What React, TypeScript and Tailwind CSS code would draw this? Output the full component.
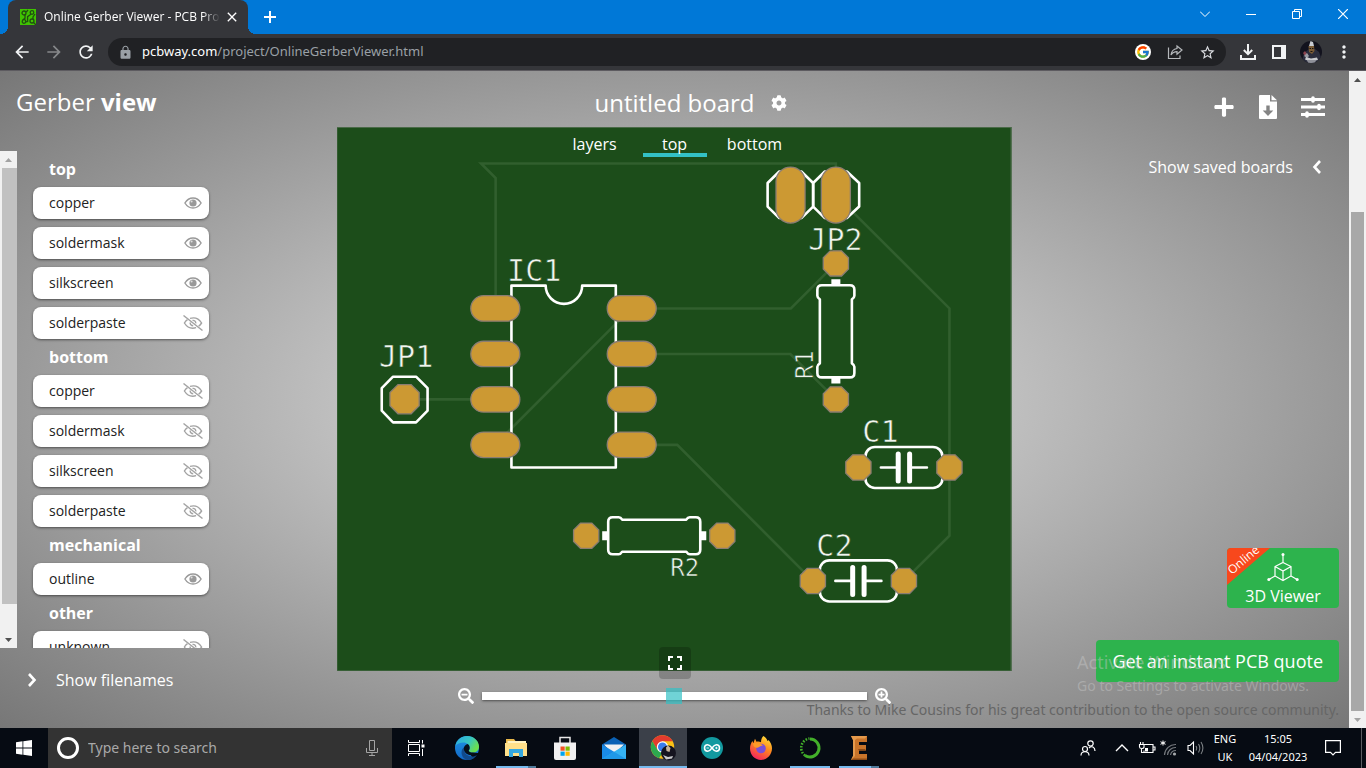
import React, { useState } from "react";
import { FcGoogle } from "react-icons/fc";
import {
  MdArrowBack,
  MdArrowForward,
  MdClose,
  MdFullscreen,
  MdLock,
  MdMoreVert,
  MdRefresh,
  MdStarBorder,
} from "react-icons/md";
import { FaCog, FaPlus, FaSearchMinus, FaSearchPlus } from "react-icons/fa";

/* ---------- Browser chrome ---------- */

function Favicon() {
  return (
    <svg viewBox="0 0 16 16" className="size-4 shrink-0" aria-hidden="true">
      <rect width="16" height="16" fill="#3fc400" />
      <g fill="none" stroke="#214d12" strokeWidth="1.3">
        <circle cx="4" cy="4" r="2" />
        <circle cx="12" cy="3.5" r="1.8" />
        <circle cx="4" cy="12.5" r="1.8" />
        <circle cx="12" cy="12" r="2" />
        <path d="M5 5.8v3.4L3 10.8M6.2 3.2 8 1M11 5.2 7.6 7.6v4.8l-2 .6M13.5 13.5 16 16M13 10V8l2-3" />
      </g>
    </svg>
  );
}

function Avatar() {
  return (
    <svg viewBox="0 0 22 22" className="size-[22px]" aria-hidden="true">
      <clipPath id="avatar-clip">
        <circle cx="11" cy="11" r="11" />
      </clipPath>
      <g clipPath="url(#avatar-clip)">
        <rect width="22" height="22" fill="#12121d" />
        <path d="M2 20 4 12l5-4h6l4 3 3 8v4H2z" fill="#2b2d3d" />
        <path d="M9 5 10.500 0l2.500 1 1 4z" fill="#c9ccd2" />
        <path d="M8.500 5h5.500l.5 5-2.500 3-3-2z" fill="#7a5c38" />
        <path d="M9.500 7h1.500v1H9.500zM12 7h1.500v1H12zM10.500 10h2v1h-2z" fill="#1a1410" />
        <path d="M3 12l2-2 2 3-2 2z" fill="#8c4550" />
        <path d="M4 15l3-3 2 3-2 2z" fill="#9a9ca4" />
        <path d="M6 16l5 1.500 6-1 1 2.500-8 1.500-5-2z" fill="#c9cbcf" />
        <path d="M7 19h9l-1 3H8z" fill="#8f9199" />
      </g>
    </svg>
  );
}

function TabStrip() {
  return (
    <div className="flex h-[34px] items-stretch bg-[#0078d7] pl-2 text-white">
      <div className="relative flex w-60 items-center rounded-t-lg bg-[#35363a] pr-2 pl-3">
        <span className="absolute bottom-0 -left-2 size-2 bg-[radial-gradient(circle_at_0_0,transparent_8px,#35363a_8px)]" />
        <span className="absolute -right-2 bottom-0 size-2 bg-[radial-gradient(circle_at_100%_0,transparent_8px,#35363a_8px)]" />
        <Favicon />
        <span className="ml-2 flex-1 overflow-hidden text-xs whitespace-nowrap [mask-image:linear-gradient(to_right,black_90%,transparent)]">
          Online Gerber Viewer - PCB Prototype
        </span>
        <button aria-label="Close tab" className="ml-1">
          <MdClose className="size-4" />
        </button>
      </div>
      <button aria-label="New tab" className="ml-3 w-5">
        <svg viewBox="0 0 12 12" className="mx-auto size-3" stroke="#fff" strokeWidth="2" aria-hidden="true">
          <path d="M6 0v12M0 6h12" />
        </svg>
      </button>
      <div className="mb-1.5 ml-auto flex">
        <button aria-label="Search tabs" className="w-[46px]">
          <svg viewBox="0 0 10 10" className="mx-auto size-2.5" fill="none" stroke="#fff" aria-hidden="true">
            <path d="M0 2.500l5 5 5-5" />
          </svg>
        </button>
        <button aria-label="Minimize" className="w-[46px]">
          <svg viewBox="0 0 10 10" className="mx-auto size-2.5" stroke="#fff" aria-hidden="true">
            <path d="M0 5.500h10" />
          </svg>
        </button>
        <button aria-label="Restore" className="w-[46px]">
          <svg viewBox="0 0 10 10" className="mx-auto size-2.5" fill="none" stroke="#fff" aria-hidden="true">
            <path d="M.5 2.500h7v7h-7zM2.500 2.500v-2h7v7h-2" />
          </svg>
        </button>
        <button aria-label="Close window" className="w-[46px]">
          <svg viewBox="0 0 10 10" className="mx-auto size-2.5" fill="none" stroke="#fff" strokeWidth="1.2" aria-hidden="true">
            <path d="M0 0l10 10M10 0 0 10" />
          </svg>
        </button>
      </div>
    </div>
  );
}

function Toolbar() {
  return (
    <div className="flex h-[37px] items-center border-b border-[#5d5b60] bg-[#35363a] pr-3 pl-3 text-[#f1f3f4]">
      <button aria-label="Back">
        <MdArrowBack className="size-5" />
      </button>
      <button aria-label="Forward" className="ml-3 text-[#86888a]">
        <MdArrowForward className="size-5" />
      </button>
      <button aria-label="Reload" className="ml-3">
        <MdRefresh className="size-5" />
      </button>
      <div className="ml-3 flex h-7 flex-1 items-center rounded-full bg-[#202124] pr-2.5 pl-2.5">
        <MdLock className="size-[15px] shrink-0 text-[#9aa0a6]" />
        <p className="ml-[9px] flex-1 font-['Noto_Sans','Open_Sans',sans-serif] text-[13px] text-[#9aa0a6]">
          <span className="text-white">pcbway.com</span>/project/OnlineGerberViewer.html
        </p>
        <button aria-label="Google" className="rounded-full bg-white p-px">
          <FcGoogle className="size-3.5" />
        </button>
        <button aria-label="Share" className="ml-4">
          <svg viewBox="0 0 16 16" className="size-4" fill="none" stroke="#b5b8bb" strokeWidth="1.2" aria-hidden="true">
            <path d="M1.500 3.500v11h11.500v-3M10 2l5 4-5 4.200V7.600C7.500 7.600 5.500 8.500 4 11c.4-3.500 2.500-6 6-6.500z" />
          </svg>
        </button>
        <button aria-label="Bookmark" className="ml-4 text-[#dadce0]">
          <MdStarBorder className="size-[17px]" />
        </button>
      </div>
      <button aria-label="Downloads" className="ml-3.5">
        <svg viewBox="0 0 16 16" className="size-4" fill="none" stroke="#f1f3f4" strokeWidth="2" aria-hidden="true">
          <path d="M8 0v10M3.800 6 8 10.200 12.200 6M1 11v4h14v-4" />
        </svg>
      </button>
      <button aria-label="Side panel" className="ml-4">
        <svg viewBox="0 0 14 14" className="size-3.5" aria-hidden="true">
          <path fill="#f1f3f4" fillRule="evenodd" d="M0 0h14v14H0zM2 2v10h7V2z" />
        </svg>
      </button>
      <button aria-label="Profile" className="ml-3.5">
        <Avatar />
      </button>
      <button aria-label="Menu" className="ml-3">
        <MdMoreVert className="size-5" />
      </button>
    </div>
  );
}

/* ---------- Scrollbars ---------- */

function Arrow({ up = false, tone }: { up?: boolean; tone: string }) {
  return (
    <svg viewBox="0 0 17 17" className="size-[17px] shrink-0" aria-hidden="true">
      <path d={up ? "M5 11h7L8.500 7z" : "M5 7h7l-3.500 4z"} fill={tone} />
    </svg>
  );
}

/* ---------- Layer list ---------- */

function EyeOpen() {
  return (
    <svg viewBox="0 0 18 12" className="h-3 w-[18px]" aria-hidden="true">
      <path d="M.9 6C3 2.600 5.800 1 9 1s6 1.600 8.100 5C15 9.400 12.200 11 9 11S3 9.400.9 6z" fill="none" stroke="#999" strokeWidth="1.4" />
      <circle cx="9" cy="6" r="3.600" fill="#999" />
      <circle cx="7.600" cy="4.400" r="1" fill="#ddd" />
    </svg>
  );
}

function EyeClosed() {
  return (
    <svg viewBox="0 0 20 16" className="h-4 w-5" fill="none" stroke="#a3a3a3" strokeWidth="1.4" aria-hidden="true">
      <path d="M.5.500l19 15" />
      <path d="M7 3.400C11.600 2 16 3.800 18.600 8c-.9 1.400-1.900 2.500-3 3.300M4.500 4.600C3.300 5.400 2.300 6.500 1.400 8c2.600 4.200 7 6 11.700 4.700" />
      <path d="M9.500 5.400c1.800-.3 3.400 1 3.300 3M7.200 7.500c-.3 1.800 1.100 3.300 3 3.300" />
    </svg>
  );
}

type Layer = { name: string; on: boolean };

const groups: { title: string; layers: Layer[] }[] = [
  {
    title: "top",
    layers: [
      { name: "copper", on: true },
      { name: "soldermask", on: true },
      { name: "silkscreen", on: true },
      { name: "solderpaste", on: false },
    ],
  },
  {
    title: "bottom",
    layers: [
      { name: "copper", on: false },
      { name: "soldermask", on: false },
      { name: "silkscreen", on: false },
      { name: "solderpaste", on: false },
    ],
  },
  { title: "mechanical", layers: [{ name: "outline", on: true }] },
  { title: "other", layers: [{ name: "unknown", on: false }] },
];

function LayerList() {
  return (
    <div className="flex h-0 grow overflow-hidden">
      <div className="flex w-[17px] flex-col bg-[#f1f1f1]">
        <Arrow up tone="#a3a3a3" />
        <div className="ml-0.5 grow bg-[#c1c1c1]" />
        <div className="h-[27px] shrink-0" />
        <Arrow tone="#505050" />
      </div>
      <div className="ml-4 w-44">
        {groups.map((group) => (
          <section key={group.title}>
            <h2 className="flex h-9 items-center pl-4 text-base font-bold text-white">{group.title}</h2>
            <ul className="flex flex-col gap-2">
              {group.layers.map((layer) => (
                <li key={layer.name}>
                  <button
                    aria-pressed={layer.on}
                    className="flex h-8 w-full items-center justify-between rounded-lg bg-white pl-4 text-sm text-[#222] shadow-sm shadow-black/40"
                  >
                    {layer.name}
                    <span className="flex w-8 justify-center">{layer.on ? <EyeOpen /> : <EyeClosed />}</span>
                  </button>
                </li>
              ))}
            </ul>
          </section>
        ))}
      </div>
    </div>
  );
}

/* ---------- Board drawing ---------- */

function octagon(cx: number, cy: number, r: number) {
  const c = r * 0.45;
  return [
    [-c, -r], [c, -r], [r, -c], [r, c], [c, r], [-c, r], [-r, c], [-r, -c],
  ]
    .map(([x, y]) => `${cx + x},${cy + y}`)
    .join(" ");
}

const roundPads: [number, number, number][] = [
  [405.5, 399, 14.6],
  [836.5, 263.3, 12.6],
  [836.5, 399.2, 12.6],
  [587, 535.4, 12.6],
  [723, 535.4, 12.6],
  [859, 467.2, 12.6],
  [950, 467.2, 12.6],
  [813.5, 580.6, 12.6],
  [904.5, 580.6, 12.6],
];

const pinRows = [308.3, 353.8, 399.2, 444.6];

function Capacitor({ x, y }: { x: number; y: number }) {
  return (
    <g transform={`translate(${x} ${y})`}>
      <rect x="-38.500" y="-20.500" width="77" height="41" rx="9.500" />
      <path d="M-23 0h17M6 0h17" />
      <path d="M-5.700-13.500v27M5.700-13.500v27" strokeWidth="5" />
    </g>
  );
}

function Resistor({ transform }: { transform: string }) {
  return (
    <g transform={transform}>
      <path d="M-46-14q0-4.500 4.500-4.500h6q2 0 3.500 2.500h64q1.500-2.500 3.500-2.500h6q4.500 0 4.500 4.500v28q0 4.500-4.500 4.500h-6q-2 0-3.500-2.500h-64q-1.500 2.500-3.500 2.500h-6q-4.500 0-4.500-4.500z" />
      <path d="M-52-4.500h6v9h-6zM46-4.500h6v9h-6z" fill="#fff" stroke="none" />
    </g>
  );
}

function Board() {
  return (
    <svg viewBox="338 127 674 544" className="block h-auto w-full" role="img" aria-label="Top view of the board">
      <rect x="338" y="127" width="674" height="544" fill="#1c4d1a" />
      <rect x="338" y="127.500" width="673.500" height="543" fill="none" stroke="#4a6a48" />
      <g fill="none" stroke="#315f2e" strokeWidth="2.600" strokeLinecap="round">
        <path d="M496.500 300V178L482 163.500H836.500V180" />
        <path d="M640 308.300H791.500L836.500 263.300" />
        <path d="M640 353.800H791L836.500 399.200" />
        <path d="M405 399.200H490" />
        <path d="M632 308.300L496 444.600" />
        <path d="M640 444.600H678L813.500 580.600" />
        <path d="M836.500 195L950 308.300V535.400L904.500 580.600" />
      </g>
      <g fill="none" stroke="#fff" strokeWidth="2.600" strokeLinecap="round" strokeLinejoin="round">
        <path d="M512.300 285.500H546.500a18 18 0 0 0 36.500 0H616.600V467.200H512.300z" />
        <path d="M394 376.500h23l11.500 11.500v22.500L417 422.200H394L382.700 410.500V388z" />
        <path d="M768.300 183l11.700-11.500h22L813.800 183v23.500L802 218h-22l-11.700-11.500z" />
        <path d="M813.800 183l11.700-11.500h22L859.800 183v23.500L847.500 218h-22l-11.700-11.500z" />
        <Resistor transform="translate(836.5 331.2) rotate(90)" />
        <Resistor transform="translate(655 535.4)" />
        <Capacitor x={904.5} y={467.2} />
        <Capacitor x={859} y={580.6} />
      </g>
      <g fill="#cc9933" stroke="#8b7d72" strokeWidth="1.300">
        {pinRows.map((y) => (
          <g key={y}>
            <rect x="471.700" y={y - 12.7} width="49" height="25.400" rx="12.700" />
            <rect x="608" y={y - 12.7} width="49" height="25.400" rx="12.700" />
          </g>
        ))}
        <rect x="776.700" y="167" width="29" height="56" rx="14.500" />
        <rect x="822" y="167" width="29" height="56" rx="14.500" />
        {roundPads.map(([x, y, r]) => (
          <polygon key={`${x}-${y}`} points={octagon(x, y, r)} />
        ))}
      </g>
      <g
        fill="#f0f5ef"
        stroke="#1c4d1a"
        strokeWidth="0.600"
        fontFamily="'DejaVu Sans Mono', monospace"
        fontSize="30"
      >
        <text x="508" y="281">IC1</text>
        <text x="380" y="367">JP1</text>
        <text x="809" y="250">JP2</text>
        <text x="863" y="442">C1</text>
        <text x="817" y="556">C2</text>
        <text x="671" y="576" fontSize="24">R2</text>
        <text transform="translate(814 379) rotate(-90)" fontSize="24">R1</text>
      </g>
    </svg>
  );
}

/* ---------- Viewer page ---------- */

const views = ["layers", "top", "bottom"];

function Center() {
  const [view, setView] = useState("top");
  return (
    <section className="flex w-1/2 shrink-0 flex-col">
      <div className="flex h-14 items-center justify-center gap-4 pt-2 pl-8 text-white">
        <h1 className="text-2xl">untitled board</h1>
        <button aria-label="Board settings">
          <FaCog className="size-4" />
        </button>
      </div>
      <div className="relative">
        <Board />
        <div className="absolute inset-x-0 top-1 flex justify-center gap-4">
          {views.map((name) => (
            <button
              key={name}
              onClick={() => setView(name)}
              className={
                "w-16 border-b-4 pt-1 text-base leading-[18px] text-white " +
                (view === name ? "border-[#33c1c5]" : "border-transparent")
              }
            >
              {name}
            </button>
          ))}
        </div>
        <button
          aria-label="Fit board to view"
          className="absolute -bottom-2 left-1/2 flex size-8 -translate-x-1/2 items-center justify-center rounded bg-black/20 text-white"
        >
          <MdFullscreen className="size-6" />
        </button>
      </div>
      <div className="flex flex-1 items-center justify-center gap-2 pb-2 text-white">
        <button aria-label="Zoom out">
          <FaSearchMinus className="size-4" />
        </button>
        <input
          type="range"
          aria-label="Zoom"
          defaultValue={50}
          className="h-2 w-4/7 appearance-none bg-white shadow-sm shadow-black/40 [&::-webkit-slider-thumb]:size-4 [&::-webkit-slider-thumb]:appearance-none [&::-webkit-slider-thumb]:bg-[#33c1c5]/70"
        />
        <button aria-label="Zoom in">
          <FaSearchPlus className="size-4" />
        </button>
      </div>
    </section>
  );
}

function LeftPanel() {
  return (
    <aside className="flex w-1/4 flex-col">
      <div className="flex h-20 items-start px-4 pt-3 text-2xl leading-[38px] text-white">
        <span>
          Gerber <b>view</b>
        </span>
      </div>
      <LayerList />
      <button className="mb-4 flex h-16 items-center gap-4 pl-6 text-base text-white">
        <svg viewBox="0 0 16 16" className="size-4" fill="none" stroke="#fff" strokeWidth="2.600" aria-hidden="true">
          <path d="M5 2l5.500 6L5 14" />
        </svg>
        Show filenames
      </button>
    </aside>
  );
}

function RightPanel() {
  return (
    <aside className="relative flex w-1/4 flex-col items-end pr-2.5 text-white">
      <div className="mt-6 mr-3.5 flex h-6 items-center gap-6">
        <button aria-label="Add board">
          <FaPlus className="size-[22px]" />
        </button>
        <button aria-label="Download">
          <svg viewBox="0 0 18 24" className="h-6 w-[18px]" aria-hidden="true">
            <path
              fill="#fff"
              fillRule="evenodd"
              d="M1 0h10v6.500h7V23a1 1 0 0 1-1 1H1a1 1 0 0 1-1-1V1a1 1 0 0 1 1-1zM7.300 10.500v5H3.700L9 21l5.300-5.500h-3.600v-5z"
            />
            <path d="M12.500 0 18 5.300h-5.500z" fill="#fff" />
          </svg>
        </button>
        <button aria-label="Settings">
          <svg viewBox="0 0 24 22" className="h-[22px] w-6" stroke="#fff" strokeWidth="3" aria-hidden="true">
            <path d="M0 3.500h24M0 11h24M0 18.500h24" />
            <path d="M12 2v3M18 9.500v3M6 17v3" strokeWidth="3.600" strokeLinecap="round" />
          </svg>
        </button>
      </div>
      <button className="mt-8 mr-3.5 flex h-8 items-center gap-4 text-base">
        Show saved boards
        <svg viewBox="0 0 16 16" className="size-4" fill="none" stroke="#fff" strokeWidth="2.600" aria-hidden="true">
          <path d="M11 2 5.500 8l5.500 6" />
        </svg>
      </button>

      <button className="relative mt-auto flex h-15 w-28 flex-col items-center overflow-hidden rounded bg-[#2db34d] text-base">
        <svg viewBox="0 0 43 37" className="absolute top-0 left-0 h-[37px] w-[43px]" aria-hidden="true">
          <path d="M0 0h43L0 37z" fill="#f8481c" />
        </svg>
        <span className="absolute top-1 -left-0.5 -rotate-40 text-xs">Online</span>
        <svg viewBox="0 0 32 30" className="mt-1 h-[30px] w-8 shrink-0" fill="none" stroke="#fff" strokeWidth="1.200" aria-hidden="true">
          <path d="M16 10.500l8 4v9.500l-8 4.500-8-4.500v-9.500zM8 14.500l8 4.500 8-4.500M16 19v9.500M16 2.500v8M8 24l-6 3.500M24 24l6 3.500" />
          <g fill="#fff" stroke="none">
            <circle cx="16" cy="2.500" r="1.500" />
            <circle cx="1.800" cy="27.500" r="1.500" />
            <circle cx="30.200" cy="27.500" r="1.500" />
          </g>
        </svg>
        <span className="leading-7">3D Viewer</span>
      </button>
      <button className="mt-8 h-[42px] rounded bg-[#2db34d] px-4 text-lg whitespace-nowrap">
        Get an instant PCB quote
      </button>
      <p className="mt-4 mb-1.5 font-['Noto_Sans',sans-serif] text-sm leading-6 whitespace-nowrap text-[#666]">
        Thanks to Mike Cousins for his great contribution to the open source community.
      </p>
      <div className="pointer-events-none absolute right-10 bottom-8 font-['Noto_Sans',sans-serif] whitespace-nowrap text-[#c8c8c8]/45">
        <p className="text-lg leading-7">Activate Windows</p>
        <p className="text-sm leading-5">Go to Settings to activate Windows.</p>
      </div>
    </aside>
  );
}

/* ---------- Taskbar ---------- */

function EdgeIcon() {
  return (
    <svg viewBox="0 0 24 24" className="size-6" aria-hidden="true">
      <defs>
        <linearGradient id="edge-a" x1="0" y1="0" x2="1" y2="0.500">
          <stop offset="0" stopColor="#2aa8e8" />
          <stop offset="0.600" stopColor="#38c6c0" />
          <stop offset="1" stopColor="#6be04e" />
        </linearGradient>
        <linearGradient id="edge-b" x1="0" y1="0" x2="0" y2="1">
          <stop offset="0" stopColor="#1f96e6" />
          <stop offset="1" stopColor="#1267c4" />
        </linearGradient>
      </defs>
      <circle cx="12" cy="12" r="12" fill="url(#edge-b)" />
      <path d="M14 17h10l-2 4-4 1z" fill="#060b13" />
      <path d="M.3 10C1.500 4 6.300 0 12 0c6.800 0 12 5 12 10.500 0 4-3 6-6 6-2.800 0-4.300-1-4.300-1.800 0-.7 1-1.200 1-3C14.700 9 12 6.500 8.500 6.500 5 6.500 1.800 8 .3 10z" fill="url(#edge-a)" />
      <path d="M8.800 12.500c0 5 4 8 8.500 8 2 0 3.700-.6 4.800-1.500C20 22 16.500 24 12.500 24 9 23.500 6.500 20 6.500 16.500c0-3 1.500-4.600 3.300-5.700-.6.500-1 1-1 1.700z" fill="#114a8b" />
      <path d="M14.700 11.700c0-1.800-1-3.200-2.400-3.700-1.800.6-3.400 2.300-3.500 4.500 0 3.500 3 6 6 6.500 3 .3 6-.4 7.800-2-1.400 0-2.800-.2-4.600-.5-2.800 0-4.300-1-4.300-1.800 0-.7 1-1.200 1-3z" fill="#07101a" />
    </svg>
  );
}

function FolderIcon() {
  return (
    <svg viewBox="0 0 22 20" className="h-5 w-[22px]" aria-hidden="true">
      <path d="M1 1h8l1.500 2H20v6H1z" fill="#e8b84a" />
      <path d="M2.500 3H21v3H2.500z" fill="#fff3c4" />
      <path d="M0 5h22v13H0z" fill="#ffe08a" />
      <path d="M4 19v-8h14v8h-4v-4H8v4z" fill="#35a8e0" />
    </svg>
  );
}

function StoreIcon() {
  return (
    <svg viewBox="0 0 24 24" className="size-6" aria-hidden="true">
      <path d="M7 7V1.500h10V7" fill="none" stroke="#e8e8e8" strokeWidth="1.500" />
      <path d="M1 6.500h22V22a2 2 0 0 1-2 2H3a2 2 0 0 1-2-2z" fill="#f1f1f1" />
      <path d="M7.500 10.500h4.200v4.200H7.500z" fill="#f25022" />
      <path d="M12.500 10.500h4.200v4.200h-4.200z" fill="#7fba00" />
      <path d="M7.500 15.600h4.200v4.200H7.500z" fill="#00a4ef" />
      <path d="M12.500 15.600h4.200v4.200h-4.200z" fill="#ffb900" />
    </svg>
  );
}

function MailIcon() {
  return (
    <svg viewBox="0 0 24 22" className="h-[22px] w-6" aria-hidden="true">
      <path d="M0 7.500 12 0l12 7.500V10H0z" fill="#0b62b5" />
      <path d="M2 7.500h20l-8 8H9z" fill="#f2f2f2" />
      <path d="M0 7.500 24 22H0z" fill="#1a8ae5" />
      <path d="M24 7.500V22H0z" fill="#35b2f2" />
      <path d="M24 22 12 14.800 0 22z" fill="#2098e8" />
    </svg>
  );
}

function ChromeIcon() {
  return (
    <svg viewBox="0 0 26 26" className="size-[26px]" aria-hidden="true">
      <circle cx="12.500" cy="12" r="11.700" fill="#fbc116" />
      <path d="M2.400 6.200A11.700 11.700 0 0 1 22.700 6.300H12.500L7.300 15z" fill="#e33b2e" />
      <path d="M2.400 6.200 7.500 15l5 2.800-3.500 5.400A11.700 11.700 0 0 1 2.400 6.200z" fill="#2da94f" />
      <circle cx="12.500" cy="12" r="5.700" fill="#fff" />
      <circle cx="12.500" cy="12" r="4.500" fill="#3a7cec" />
      <circle cx="18.500" cy="18" r="7.500" fill="#14141f" />
      <path d="M16 12.500l2-2 2.500 2.500-1 4-3-1z" fill="#c7b49c" />
      <path d="M13 20l5 2 5-1-1 2.500-6 1z" fill="#c8cacc" />
    </svg>
  );
}

function ArduinoIcon() {
  return (
    <svg viewBox="0 0 22 22" className="size-[22px]" fill="none" stroke="#fff" strokeWidth="1.500" aria-hidden="true">
      <circle cx="11" cy="11" r="11" fill="#12999f" stroke="none" />
      <path d="M11 11c-1.600-2.200-2.700-3.200-4.300-3.200a3.200 3.200 0 0 0 0 6.400c1.600 0 2.700-1 4.300-3.200s2.700-3.200 4.300-3.200a3.200 3.200 0 0 1 0 6.400c-1.600 0-2.700-1-4.300-3.200z" />
      <path d="M5.500 11h2.400M14.200 11h2.400M15.400 9.800v2.400" strokeWidth="0.900" />
    </svg>
  );
}

function FirefoxIcon() {
  return (
    <svg viewBox="0 0 24 24" className="size-6" aria-hidden="true">
      <defs>
        <linearGradient id="fox" x1="0.800" y1="0" x2="0.300" y2="1">
          <stop offset="0" stopColor="#ffe23a" />
          <stop offset="0.450" stopColor="#ff8a1f" />
          <stop offset="1" stopColor="#f2205f" />
        </linearGradient>
      </defs>
      <path d="M14.500 0c2.500 1.500 3.500 3.500 4 5 .8-.3 1-1 1-1 2 2 3.500 5 3.500 8.300C23 18.800 18 24 12 24S1 19 1 12.500c0-3 1-5.500 2.500-7.500l.8 2.300L6 2.800l1.500 3c1.500-.5 3-.3 4.500.4 0-2.700 1-5 2.500-6.200z" fill="url(#fox)" />
      <circle cx="12" cy="12.500" r="4.800" fill="#7a4fd8" />
      <path d="M4 7.500c3-1.500 5.500-1 8 .5l2 1.500c-2 0-3.500 1.500-5 2C7 12.500 4 11 4 7.500z" fill="#ff9a28" />
    </svg>
  );
}

function AnacondaIcon() {
  return (
    <svg viewBox="0 0 24 24" className="size-6" fill="none" stroke="#43b02a" aria-hidden="true">
      <path d="M12 3a9 9 0 1 1-5 16.500" strokeWidth="3" />
      <path d="M7 19.500A9.500 9.500 0 0 1 11.500 2.500" strokeWidth="2.600" strokeDasharray="1.600 1.400" />
    </svg>
  );
}

function EagleIcon() {
  return (
    <svg viewBox="0 0 16 24" className="h-6 w-4" aria-hidden="true">
      <path d="M0 0h16v6h-8v3h7v5.500H8V18h8v6H0l2-4V4z" fill="#c8742a" />
      <path d="M0 0h16l-2 2.500H6L4 4v16l-4 4 2-4V4z" fill="#e59a4c" />
      <path d="M8 14.500h7l-1-1.500H7zM0 24h16v-1.500H2z" fill="#8c4a14" />
    </svg>
  );
}

const apps = [
  { name: "Microsoft Edge", icon: <EdgeIcon />, state: "" },
  { name: "File Explorer", icon: <FolderIcon />, state: "stacked" },
  { name: "Microsoft Store", icon: <StoreIcon />, state: "" },
  { name: "Mail", icon: <MailIcon />, state: "" },
  { name: "Google Chrome", icon: <ChromeIcon />, state: "active" },
  { name: "Arduino", icon: <ArduinoIcon />, state: "" },
  { name: "Firefox", icon: <FirefoxIcon />, state: "" },
  { name: "Anaconda", icon: <AnacondaIcon />, state: "open" },
  { name: "Eagle", icon: <EagleIcon />, state: "stacked" },
];

const indicators: Record<string, string> = {
  "": "w-10",
  open: "w-10 bg-[#76b9ed]",
  stacked: "w-10 border-r-8 border-[#4f7a9b] bg-[#76b9ed]",
  active: "w-full bg-[#76b9ed]",
};

function Taskbar() {
  return (
    <footer className="flex h-10 items-stretch bg-[#060b13] text-white">
      <button aria-label="Start" className="w-12">
        <svg viewBox="0 0 16 16" className="mx-auto size-4" fill="#fff" aria-hidden="true">
          <path d="M0 2.200 6.500 1.300V7.600H0zM7.300 1.200 16 0v7.600H7.300zM0 8.400h6.500v6.300L0 13.800zM7.300 8.400H16V16l-8.700-1.200z" />
        </svg>
      </button>
      <label className="flex w-86 items-center bg-[#333] pr-3 pl-2">
        <span className="m-px size-[22px] shrink-0 rounded-full border-3 border-white" />
        <input
          type="text"
          aria-label="Search"
          placeholder="Type here to search"
          className="ml-2 min-w-0 flex-1 bg-transparent font-['Noto_Sans',sans-serif] text-sm outline-none placeholder:text-[#a9a9a9]"
        />
        <svg viewBox="0 0 12 18" className="h-[18px] w-4" fill="none" stroke="#a5a5a5" aria-hidden="true">
          <path d="M3.500 1.500h5v10h-5zM.5 9v4.500h11V9M6 13.500v3M3 16.500h6" />
        </svg>
      </label>
      <button aria-label="Task view" className="w-12">
        <svg viewBox="0 0 17 16" className="mx-auto h-4 w-[17px]" fill="none" stroke="#fff" aria-hidden="true">
          <path d="M.5 0v2.500h11V0M.5 16v-2.500h11V16M.5 4.500h11v7H.5zM14.500 0v3.500M14.500 9v7" />
          <path d="M13.500 4.500h3v3h-3z" fill="#fff" stroke="none" />
        </svg>
      </button>
      <nav className="ml-[3px] flex gap-px">
        {apps.map((app) => (
          <button
            key={app.name}
            aria-label={app.name}
            className={"flex w-12 flex-col items-center " + (app.state === "active" ? "bg-[#3b4049]" : "")}
          >
            <span className="flex flex-1 items-center">{app.icon}</span>
            <span className={"-mt-0.5 h-0.5 " + indicators[app.state]} />
          </button>
        ))}
      </nav>
      <div className="ml-auto flex items-center">
        <svg viewBox="0 0 16 16" className="mr-3 size-4" fill="none" stroke="#fff" strokeWidth="1.200" aria-hidden="true">
          <circle cx="10.500" cy="3.500" r="2.700" />
          <circle cx="5" cy="9" r="2.500" />
          <path d="M1 15.500c0-5 8-5 8 0M9 8c2.500-2.500 6-1 6 3" />
        </svg>
        <svg viewBox="0 0 24 16" className="mr-px h-4 w-6" fill="none" stroke="#fff" strokeWidth="1.400" aria-hidden="true">
          <path d="M8 11l6-6 6 6" />
        </svg>
        <svg viewBox="0 0 24 16" className="h-4 w-6" fill="none" stroke="#fff" strokeWidth="1.100" aria-hidden="true">
          <path d="M11.500 4.500h8.500v8h-9v-2M20.500 7h1.500v3h-1.500M7.500 2v2.500M10 2v2.500M6.500 4.500H11V7q0 1.500-2.200 1.500T6.500 7zM8.500 8.500v4h2" />
          <path d="M12 8h3v3.500h-3z" fill="#fff" stroke="none" />
        </svg>
        <svg viewBox="0 0 24 16" className="h-4 w-6" fill="none" stroke="#75797e" strokeWidth="1.200" aria-hidden="true">
          <path d="M7.500 15A11 11 0 0 1 19 4.500M10.500 15A8 8 0 0 1 19 7.500M13.500 15A5.500 5.500 0 0 1 19 10.500" />
          <circle cx="17.500" cy="14" r="1.600" fill="#a5a8ab" stroke="none" />
          <path d="M6 .5v5M3.500 1.700l5 2.600M8.500 1.700l-5 2.600" stroke="#fff" strokeWidth="1" />
        </svg>
        <svg viewBox="0 0 24 16" className="h-4 w-6" fill="none" stroke="#fff" strokeWidth="1.100" aria-hidden="true">
          <path d="M7 5.500h2L12.500 2v12L9 10.500H7z" />
          <path d="M15 6q1.400 2 0 4.500M17.500 4q2.600 4 0 8.500M20 2q3.800 6 0 12" stroke="#7c8084" />
        </svg>
        <div className="ml-0.5 flex w-9 flex-col text-center font-['Noto_Sans',sans-serif] text-[11px] leading-[18px]">
          <span>ENG</span>
          <span>UK</span>
        </div>
        <div className="ml-1 flex w-[62px] flex-col text-center font-['Noto_Sans',sans-serif] text-[11px] leading-[18px]">
          <span>15:05</span>
          <span>04/04/2023</span>
        </div>
        <button aria-label="Notifications" className="mr-1 w-12">
          <svg viewBox="0 0 16 16" className="mx-auto size-4" fill="none" stroke="#fff" strokeWidth="1.200" aria-hidden="true">
            <path d="M.6.600h14.800v11.800h-4.900L8 15l-2.500-2.600H.6z" />
          </svg>
        </button>
        <span className="h-10 w-[5px] border-l border-[#5a5d62]" />
      </div>
    </footer>
  );
}

export default function App() {
  return (
    <div className="flex min-h-screen flex-col font-['Open_Sans','Noto_Sans',sans-serif]">
      <header>
        <TabStrip />
        <Toolbar />
      </header>
      <div className="flex flex-1">
        <main className="flex flex-1 overflow-hidden bg-[radial-gradient(#e6e6e6,#777)]">
          <LeftPanel />
          <Center />
          <RightPanel />
        </main>
        <div className="flex w-[17px] flex-col bg-[#f1f1f1]">
          <Arrow up tone="#505050" />
          <div className="grow" />
          <div className="mx-0.5 h-[76%] bg-[#a8a8a8]" />
          <Arrow tone="#a3a3a3" />
        </div>
      </div>
      <Taskbar />
    </div>
  );
}
